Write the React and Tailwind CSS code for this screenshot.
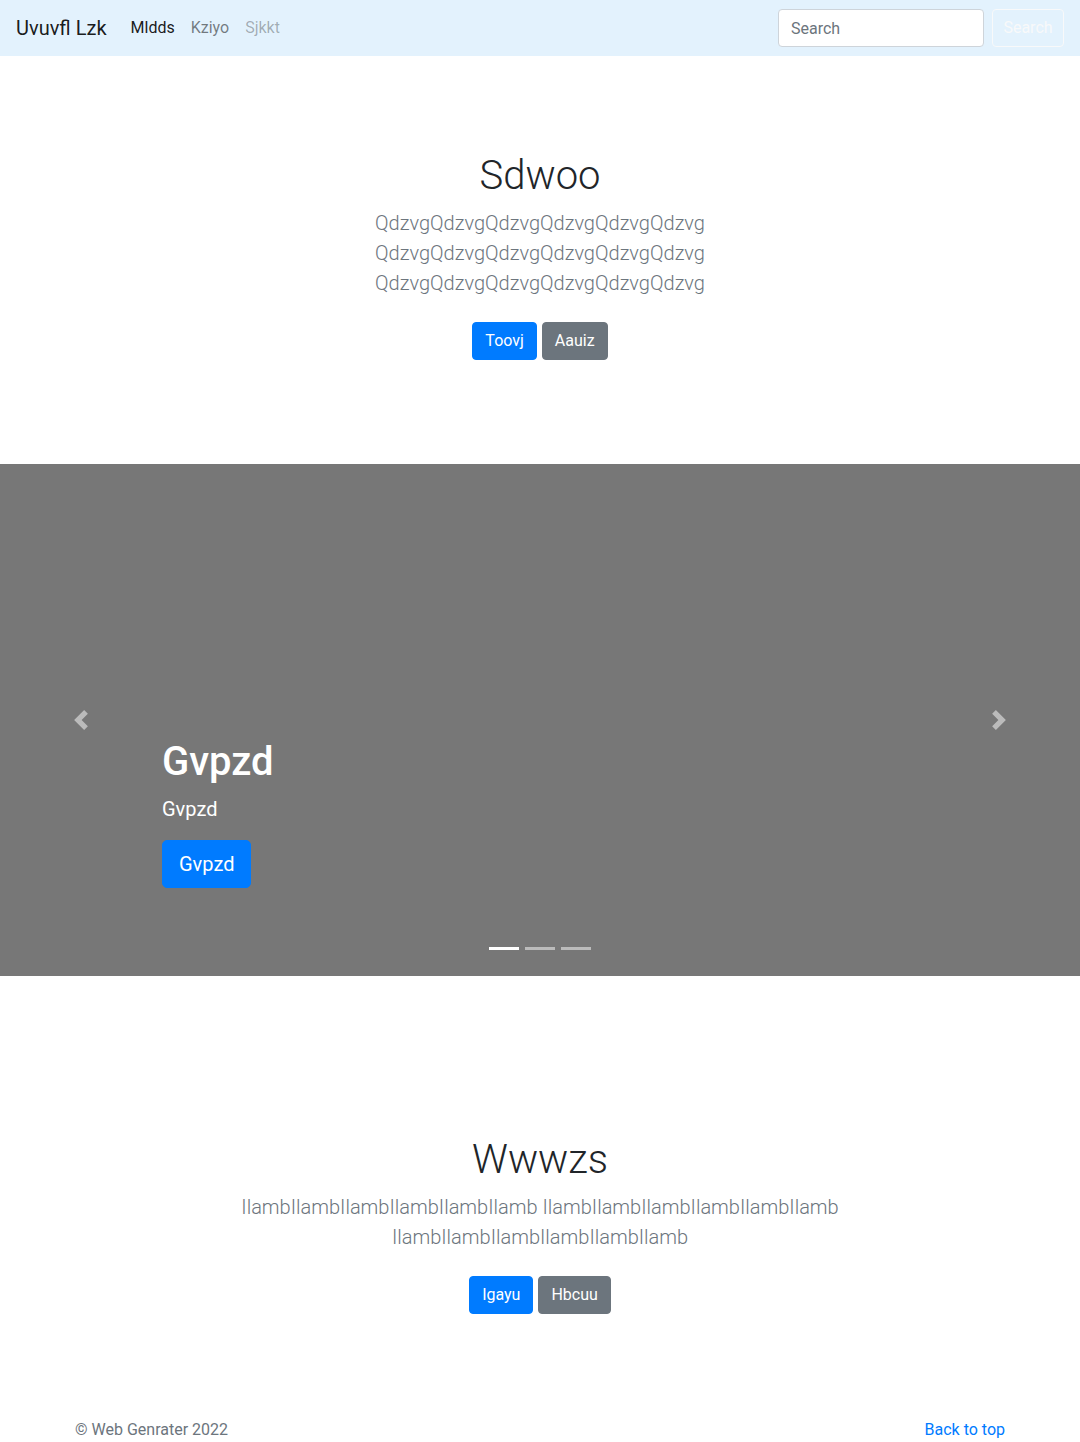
export default function App() {
  return (
    <div className="min-h-screen bg-white font-['Roboto','Liberation_Sans',sans-serif] text-base leading-6 text-[#212529]">
      <nav className="flex h-14 items-center bg-[#e3f2fd] px-4">
        <a className="mr-4 py-[5px] text-xl leading-[30px] text-black/90">Uvuvfl Lzk</a>
        <ul className="flex">
          <li><a className="block p-2 text-black/90">Mldds</a></li>
          <li><a className="block p-2 text-black/50">Kziyo</a></li>
          <li><a className="block p-2 text-black/30">Sjkkt</a></li>
        </ul>
        <form className="ml-auto flex items-center">
          <input
            placeholder="Search"
            className="h-[38px] w-[206px] rounded border border-[#ced4da] bg-white px-3 text-base text-[#495057] placeholder:text-[#6c757d] focus:outline-none"
          />
          <button type="button" className="ml-2 h-[38px] w-[72px] rounded border border-[#f8f9fa] text-base text-[#f8f9fa]">
            Search
          </button>
        </form>
      </nav>

      <section className="py-24 text-center">
        <h1 className="mb-2 text-[40px] font-light leading-[48px]">Sdwoo</h1>
        <p className="mb-4 text-xl font-light leading-[30px] text-[#6c757d]">
          QdzvgQdzvgQdzvgQdzvgQdzvgQdzvg<br />
          QdzvgQdzvgQdzvgQdzvgQdzvgQdzvg<br />
          QdzvgQdzvgQdzvgQdzvgQdzvgQdzvg
        </p>
        <div className="flex justify-center gap-[5px] py-2">
          <a className="rounded border border-[#007bff] bg-[#007bff] px-3 py-[6px] text-white">Toovj</a>
          <a className="rounded border border-[#6c757d] bg-[#6c757d] px-3 py-[6px] text-white">Aauiz</a>
        </div>
      </section>

      <div className="relative mb-16 flex h-[512px] flex-col justify-end bg-[#777] px-[15%] pb-[88px] text-white">
        <h1 className="mb-2 text-[40px] font-medium leading-[48px]">Gvpzd</h1>
        <p className="mb-4 text-xl leading-[30px]">Gvpzd</p>
        <div>
          <a className="inline-block rounded-[5px] border border-[#007bff] bg-[#007bff] px-4 py-2 text-xl leading-[30px] text-white">Gvpzd</a>
        </div>

        <a className="absolute inset-y-0 left-0 flex w-[15%] items-center justify-center opacity-50">
          <svg width="20" height="20" viewBox="0 0 8 8" fill="#fff">
            <path d="M5.25 0l-4 4 4 4 1.5-1.5L4.25 4l2.5-2.5L5.25 0z" />
          </svg>
        </a>
        <a className="absolute inset-y-0 right-0 flex w-[15%] items-center justify-center opacity-50">
          <svg width="20" height="20" viewBox="0 0 8 8" fill="#fff">
            <path d="M2.75 0l-1.5 1.5L3.75 4l-2.5 2.5L2.75 8l4-4-4-4z" />
          </svg>
        </a>

        <ol className="absolute inset-x-0 bottom-[26px] flex justify-center gap-[6px]">
          <li className="h-[3px] w-[30px] bg-white"></li>
          <li className="h-[3px] w-[30px] bg-white/50"></li>
          <li className="h-[3px] w-[30px] bg-white/50"></li>
        </ol>
      </div>

      <section className="py-24 text-center">
        <h1 className="mb-2 text-[40px] font-light leading-[48px]">Wwwzs</h1>
        <p className="mb-4 text-xl font-light leading-[30px] text-[#6c757d]">
          IlambIlambIlambIlambIlambIlamb IlambIlambIlambIlambIlambIlamb<br />
          IlambIlambIlambIlambIlambIlamb
        </p>
        <div className="flex justify-center gap-[5px] py-2">
          <a className="rounded border border-[#007bff] bg-[#007bff] px-3 py-[6px] text-white">Igayu</a>
          <a className="rounded border border-[#6c757d] bg-[#6c757d] px-3 py-[6px] text-white">Hbcuu</a>
        </div>
      </section>

      <footer className="flex justify-between px-[75px] pb-12 text-[#6c757d]">
        <p>© Web Genrater 2022</p>
        <a className="text-[#007bff]">Back to top</a>
      </footer>
    </div>
  )
}
